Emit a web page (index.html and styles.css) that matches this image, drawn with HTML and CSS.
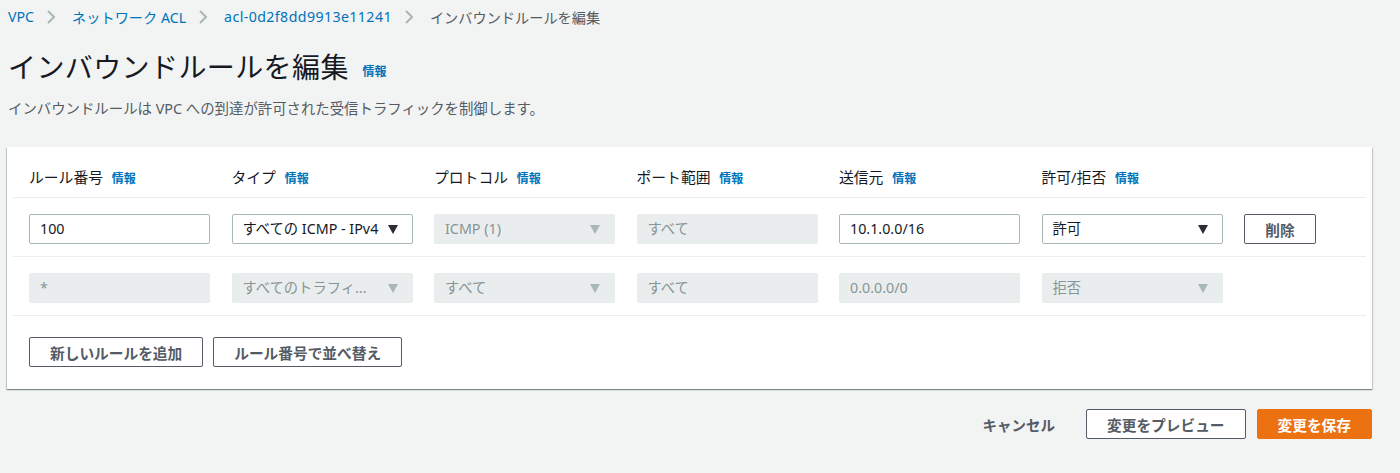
FILE: index.html
```
<!DOCTYPE html>
<html lang="ja">
<head>
    <meta charset="UTF-8">
    <title>インバウンドルールを編集</title>
    <link rel="stylesheet" href="styles.css">
</head>
<body>
    <nav class="breadcrumb">
        <a href="#">VPC</a>
        <svg class="sep" width="8" height="14" viewBox="0 0 8 14"><path d="M1 1l6 6-6 6" fill="none" stroke="#aab7b8" stroke-width="2"/></svg>
        <a href="#">ネットワーク ACL</a>
        <svg class="sep" width="8" height="14" viewBox="0 0 8 14"><path d="M1 1l6 6-6 6" fill="none" stroke="#aab7b8" stroke-width="2"/></svg>
        <a href="#" class="acl-id">acl-0d2f8dd9913e11241</a>
        <svg class="sep" width="8" height="14" viewBox="0 0 8 14"><path d="M1 1l6 6-6 6" fill="none" stroke="#aab7b8" stroke-width="2"/></svg>
        <span class="current">インバウンドルールを編集</span>
    </nav>

    <header class="page-head">
        <h1>インバウンドルールを編集 <a href="#" class="info">情報</a></h1>
        <p class="desc">インバウンドルールは VPC への到達が許可された受信トラフィックを制御します。</p>
    </header>

    <section class="card">
        <div class="rule-row head-row">
            <div class="col-head">ルール番号 <a href="#" class="info">情報</a></div>
            <div class="col-head">タイプ <a href="#" class="info">情報</a></div>
            <div class="col-head">プロトコル <a href="#" class="info">情報</a></div>
            <div class="col-head">ポート範囲 <a href="#" class="info">情報</a></div>
            <div class="col-head">送信元 <a href="#" class="info">情報</a></div>
            <div class="col-head">許可/拒否 <a href="#" class="info">情報</a></div>
            <div></div>
        </div>

        <div class="rule-row">
            <div class="field">100</div>
            <div class="field select">すべての ICMP - IPv4<span class="arrow"></span></div>
            <div class="field select disabled">ICMP (1)<span class="arrow"></span></div>
            <div class="field disabled">すべて</div>
            <div class="field">10.1.0.0/16</div>
            <div class="field select">許可<span class="arrow"></span></div>
            <button class="btn btn-small">削除</button>
        </div>

        <div class="rule-row">
            <div class="field disabled">*</div>
            <div class="field select disabled">すべてのトラフィ...<span class="arrow"></span></div>
            <div class="field select disabled">すべて<span class="arrow"></span></div>
            <div class="field disabled">すべて</div>
            <div class="field disabled">0.0.0.0/0</div>
            <div class="field select disabled">拒否<span class="arrow"></span></div>
            <div></div>
        </div>

        <div class="card-actions">
            <button class="btn">新しいルールを追加</button>
            <button class="btn">ルール番号で並べ替え</button>
        </div>
    </section>

    <footer class="page-actions">
        <button class="btn-link">キャンセル</button>
        <button class="btn">変更をプレビュー</button>
        <button class="btn btn-primary">変更を保存</button>
    </footer>
</body>
</html>
```

FILE: styles.css
```
:root {
    --text-color: #16191f;
    --muted-color: #545b64;
    --link-color: #0073bb;
    --border-color: #aab7b8;
    --line-color: #eaeded;
    --disabled-bg: #eaeded;
    --disabled-text: #879596;
    --primary-color: #ec7211;
}

* {
    box-sizing: border-box;
    margin: 0;
    padding: 0;
}

body {
    font-family: "Noto Sans", "Noto Sans CJK JP", sans-serif;
    font-size: 14px;
    color: var(--text-color);
    background-color: #f2f3f3;
    width: 1400px;
}

a {
    color: var(--link-color);
    text-decoration: none;
}

.breadcrumb {
    display: flex;
    align-items: center;
    padding: 5px 8px 0;
    height: 28px;
    font-size: 14.2px;
}

.breadcrumb .sep {
    margin: 0 17px 0 13px;
}

.breadcrumb .acl-id {
    letter-spacing: 0.4px;
}

.breadcrumb .current {
    color: var(--muted-color);
}

.page-head {
    padding: 20px 8px 0;
}

h1 {
    font-size: 28px;
    font-weight: 400;
    line-height: 38px;
    letter-spacing: 0.4px;
}

.info {
    font-size: 12px;
    font-weight: 700;
    letter-spacing: 0;
    vertical-align: 2px;
    margin-left: 6px;
}

.desc {
    margin-top: 8px;
    font-size: 14.4px;
    color: var(--muted-color);
    line-height: 20px;
}

.card {
    margin: 28px 28px 0 7px;
    padding: 0 6px;
    background: white;
    box-shadow: 0 1px 1px rgba(0, 28, 36, 0.3), 1px 1px 1px rgba(0, 28, 36, 0.15), -1px 1px 1px rgba(0, 28, 36, 0.15);
}

.rule-row {
    display: grid;
    grid-template-columns: repeat(6, 181px) 72px;
    column-gap: 21.5px;
    align-items: center;
    padding: 16px 16px 12px;
    border-bottom: 1px solid var(--line-color);
}

.head-row {
    height: 51px;
    padding: 9px 16px 0;
}

.col-head {
    font-size: 14.8px;
}

.col-head .info {
    margin-left: 5px;
    vertical-align: 0;
}

.field {
    position: relative;
    height: 30px;
    line-height: 28px;
    padding: 0 10px;
    border: 1px solid var(--border-color);
    border-radius: 2px;
    font-size: 14.3px;
    white-space: nowrap;
}

.field.select {
    padding-right: 30px;
}

.field.disabled {
    background: var(--disabled-bg);
    border-color: var(--disabled-bg);
    color: var(--disabled-text);
}

.arrow {
    position: absolute;
    right: 14px;
    top: 10px;
    border-left: 5.5px solid transparent;
    border-right: 5.5px solid transparent;
    border-top: 9px solid #2a2e33;
}

.field.disabled .arrow {
    border-top-color: #aab7b8;
}

.btn {
    height: 30px;
    padding: 0 20px;
    background: white;
    border: 1px solid var(--muted-color);
    border-radius: 2px;
    color: var(--muted-color);
    font-family: inherit;
    font-size: 14.7px;
    font-weight: 700;
    cursor: pointer;
}

.btn-small {
    padding: 0;
    width: 72px;
}

.btn-primary {
    background: var(--primary-color);
    border-color: var(--primary-color);
    color: white;
}

.btn-link {
    background: none;
    border: none;
    color: var(--muted-color);
    font-family: inherit;
    font-size: 14.5px;
    font-weight: 700;
    padding: 0 20px;
    cursor: pointer;
}

.card-actions {
    display: flex;
    gap: 10px;
    padding: 21px 16px 22px;
}

.page-actions {
    display: flex;
    justify-content: flex-end;
    gap: 11px;
    margin: 20px 28px 0 0;
}
```
